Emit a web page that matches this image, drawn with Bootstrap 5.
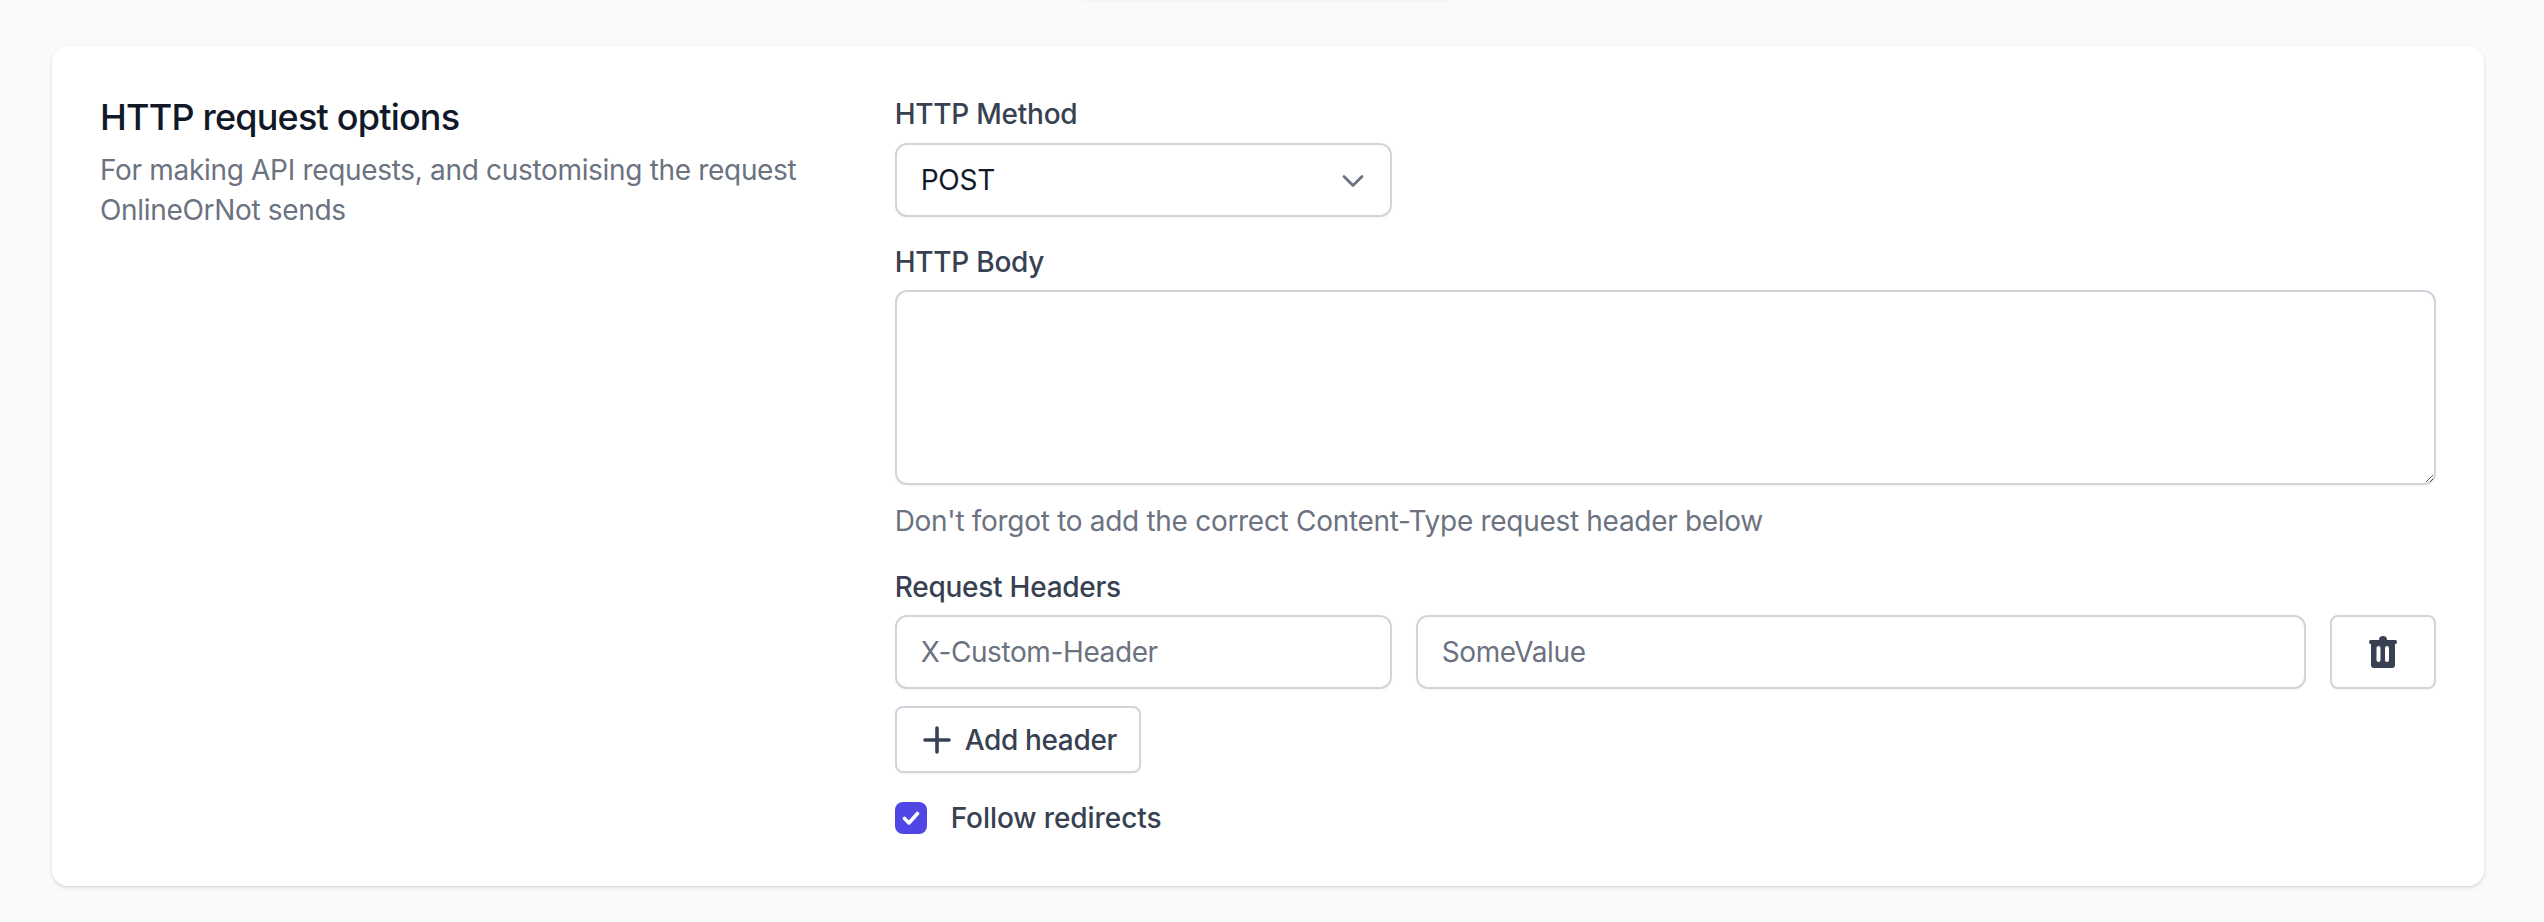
<!DOCTYPE html>
<html lang="en">
<head>
  <meta charset="UTF-8" />
  <meta name="viewport" content="width=device-width, initial-scale=1" />
  <title>HTTP request options</title>
  <link href="https://cdn.jsdelivr.net/npm/bootstrap@5.3.0/dist/css/bootstrap.min.css" rel="stylesheet" />
  <style>
    body {
      background-color: #f9fafb;
      font-family: "Inter", "Liberation Sans", sans-serif;
      color: #374151;
      letter-spacing: -0.25px;
      padding: 0 60px 36px 52px;
    }
    /* bottom edge of the section above, barely visible */
    .prev-edge { width: 364px; height: 2px; margin: 0 0 44px 1031px; background: #f5f5f7; }
    .panel {
      background: #fff;
      border: 0;
      border-radius: 16px;
      box-shadow: 0 2px 4px rgba(0,0,0,.1), 0 1px 2px rgba(0,0,0,.06);
      padding: 48px;
      gap: 48px;
    }
    .side { width: 746.7px; flex: none; }
    .side h3 { font-size: 36px; line-height: 46px; font-weight: 500; letter-spacing: -0.8px; color: #111827; margin: 0 0 10px; }
    .side p { font-size: 28px; line-height: 40px; letter-spacing: -0.32px; color: #6b7280; margin: 0; }
    .fields { flex: 1 1 0; min-width: 0; }
    .lbl { display: block; font-size: 28px; line-height: 40px; font-weight: 500; color: #374151; margin-bottom: 8px; }
    .lbl-first { margin-bottom: 9px; }
    .lbl-body { margin-top: 25px; }
    .lbl-hdrs { margin-top: 26px; }
    .fld {
      display: block; width: 100%; height: 74px;
      border: 2px solid #d1d5db; border-radius: 12px;
      font-size: 28px; padding: 0 24px; color: #111827; background: #fff;
      box-shadow: 0 1px 2px rgba(0,0,0,.05);
      font-family: inherit; letter-spacing: inherit; outline: 0;
    }
    .fld::placeholder { color: #6b7280; opacity: 1; letter-spacing: -0.4px; }
    .pick { width: 497px; position: relative; line-height: 70px; }
    .pick svg { position: absolute; right: 25px; top: 24px; }
    .body-txt { height: 195px; padding: 16px 24px; resize: both; }
    .hint { font-size: 28px; line-height: 40px; letter-spacing: -0.3px; color: #6b7280; margin: 16px 0 0; }
    .hdr-name { width: 497px; flex: none; }
    .hdr-val { flex: 1 1 0; min-width: 0; }
    .act {
      background: #fff; border: 2px solid #d1d5db; border-radius: 8px; color: #374151;
      font-size: 28px; font-weight: 500; letter-spacing: -0.35px; box-shadow: 0 1px 2px rgba(0,0,0,.05);
    }
    .trash { width: 106px; height: 74px; flex: none; }
    .addh { width: 246px; height: 67px; padding: 0 0 0 26px; gap: 14px; margin-top: 17px; }
    .tick-row { margin-top: 25px; }
    .tick {
      width: 32px; height: 32px; border-radius: 8px; background: #4f46e5; flex: none;
    }
    .tick-lbl { font-size: 28px; line-height: 40px; font-weight: 500; letter-spacing: -0.08px; color: #374151; }
  </style>
</head>
<body>

<div class="prev-edge"></div>

<form class="panel d-flex">
  <div class="side">
    <h3>HTTP request options</h3>
    <p>For making API requests, and customising the request OnlineOrNot sends</p>
  </div>
  <div class="fields">
    <label class="lbl lbl-first">HTTP Method</label>
    <div class="fld pick">POST
      <svg width="24" height="24" viewBox="0 0 24 24" fill="none" stroke="#6b7280" stroke-width="2.8" stroke-linecap="round" stroke-linejoin="round"><path d="M3 7.5l9 9 9-9"/></svg>
    </div>

    <label class="lbl lbl-body">HTTP Body</label>
    <textarea class="fld body-txt"></textarea>
    <p class="hint">Don't forgot to add the correct Content-Type request header below</p>

    <label class="lbl lbl-hdrs">Request Headers</label>
    <div class="d-flex gap-4">
      <input class="fld hdr-name" type="text" placeholder="X-Custom-Header" />
      <input class="fld hdr-val" type="text" placeholder="SomeValue" />
      <button type="button" class="act trash d-flex align-items-center justify-content-center">
        <svg width="28" height="32" viewBox="0 0 28 32"><path fill="#374151" d="M10 4a4 4 0 0 1 8 0h8.5a1.5 2 0 0 1 0 4H26v21a3 3 0 0 1-3 3H5a3 3 0 0 1-3-3V8h-.5a1.5 2 0 0 1 0-4z"/><rect x="7.5" y="10" width="4" height="16" rx="2" fill="#fff"/><rect x="16" y="10" width="4" height="16" rx="2" fill="#fff"/></svg>
      </button>
    </div>

    <button type="button" class="act addh d-flex align-items-center">
      <svg width="28" height="28" viewBox="0 0 28 28" fill="none" stroke="#374151" stroke-width="3.6" stroke-linecap="round"><path d="M14 2v24M2 14h24"/></svg>
      Add header
    </button>

    <div class="tick-row d-flex align-items-center gap-4">
      <span class="tick d-flex align-items-center justify-content-center">
        <svg width="18" height="18" viewBox="0 0 18 18" fill="none" stroke="#fff" stroke-width="3.6" stroke-linecap="round" stroke-linejoin="round"><path d="M2.5 9.5l4.5 4.5 8.5-9.5"/></svg>
      </span>
      <span class="tick-lbl">Follow redirects</span>
    </div>
  </div>
</form>

<script src="https://cdn.jsdelivr.net/npm/bootstrap@5.3.0/dist/js/bootstrap.bundle.min.js"></script>
</body>
</html>
